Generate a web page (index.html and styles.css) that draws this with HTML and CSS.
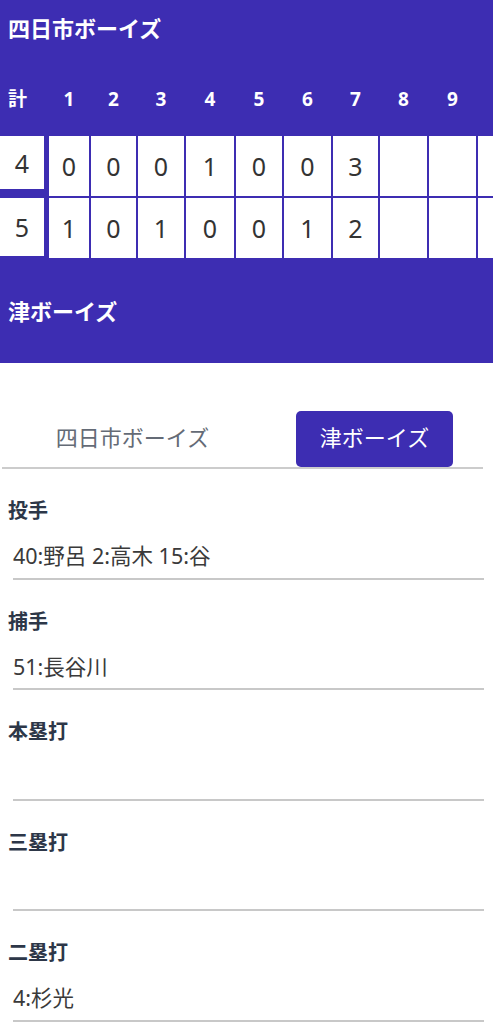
FILE: index.html
```html
<!DOCTYPE html>
<html lang="ja">
<head>
<meta charset="utf-8">
<title>スコア</title>
<link rel="stylesheet" href="styles.css">
</head>
<body>
<div class="score">
  <div class="team-name first">四日市ボーイズ</div>
  <div class="head-row">
    <div class="head-total">計</div>
    <div class="inning-grid heads">
      <div>1</div><div>2</div><div>3</div><div>4</div><div>5</div><div>6</div><div>7</div><div>8</div><div>9</div><div></div>
    </div>
  </div>
  <div class="board">
    <div class="totals">
      <div class="total t1">4</div>
      <div class="total t2">5</div>
    </div>
    <div class="inning-grid cells">
      <div>0</div><div>0</div><div>0</div><div>1</div><div>0</div><div>0</div><div>3</div><div></div><div></div><div></div>
      <div>1</div><div>0</div><div>1</div><div>0</div><div>0</div><div>1</div><div>2</div><div></div><div></div><div></div>
    </div>
  </div>
  <div class="team-name second">津ボーイズ</div>
</div>

<div class="tabs">
  <div class="tab">四日市ボーイズ</div>
  <div class="tab active">津ボーイズ</div>
</div>

<div class="stat">
  <div class="stat-label">投手</div>
  <div class="stat-value">40:野呂 2:高木 15:谷</div>
</div>
<div class="stat">
  <div class="stat-label">捕手</div>
  <div class="stat-value">51:長谷川</div>
</div>
<div class="stat">
  <div class="stat-label">本塁打</div>
  <div class="stat-value"></div>
</div>
<div class="stat">
  <div class="stat-label">三塁打</div>
  <div class="stat-value"></div>
</div>
<div class="stat">
  <div class="stat-label">二塁打</div>
  <div class="stat-value">4:杉光</div>
</div>
</body>
</html>
```
FILE: styles.css
```css
* { box-sizing: border-box; }
html, body { margin: 0; padding: 0; }
body {
  font-family: "Noto Sans", "Noto Sans CJK JP", sans-serif;
  background: #ffffff;
  width: 493px;
  overflow-x: hidden;
}

.score {
  background: #3d2db2;
  color: #ffffff;
  overflow: hidden;
}

.team-name {
  font-size: 22px;
  font-weight: 700;
  line-height: 30px;
  padding-left: 8px;
}
.team-name.first { padding-top: 13px; padding-bottom: 13px; }
.team-name.second { padding-top: 38px; padding-bottom: 37px; }

.head-row {
  display: flex;
  padding-top: 28px;
  margin-bottom: 21px;
  line-height: 30px;
  font-size: 19px;
  font-weight: 700;
}
.head-total {
  width: 47px;
  flex: none;
  padding-left: 8px;
}

.inning-grid {
  display: grid;
  grid-template-columns: 40px 45px 46px 48px 46px 47px 45px 47px 47px 47px;
  column-gap: 2px;
  padding-left: 2px;
  flex: none;
}
.heads div { text-align: center; }

.board {
  display: flex;
}
.totals {
  width: 47px;
  flex: none;
  padding-top: 1px;
}
.total {
  width: 44px;
  background: #ffffff;
  color: #333333;
  font-size: 25px;
  font-weight: 400;
  display: flex;
  align-items: center;
  justify-content: center;
}
.total.t1 { height: 53px; }
.total.t2 { height: 58px; margin-top: 9px; }

.cells {
  grid-template-rows: 60px 60px;
  row-gap: 2px;
  padding-top: 1px;
}
.cells div {
  background: #ffffff;
  color: #333333;
  font-size: 25px;
  font-weight: 400;
  display: flex;
  align-items: center;
  justify-content: center;
}

.tabs {
  display: flex;
  align-items: center;
  margin: 48px 10px 0 2px;
  border-bottom: 2px solid #cccccc;
}
.tab {
  font-size: 22px;
  line-height: 30px;
  padding: 11px 23px 15px;
  color: #646b76;
  margin-left: 30px;
  width: 201px;
  text-align: center;
}
.tab.active {
  margin-left: 63px;
  width: 157px;
  background: #3d2db2;
  color: #ffffff;
  border-radius: 5px;
  padding: 11px 0 15px;
}

.stat {
  padding-top: 30px;
}
.stat-label {
  font-size: 20px;
  font-weight: 700;
  line-height: 24px;
  color: #2d3748;
  padding-left: 8px;
}
.stat-value {
  margin: 21px 9px 0 13px;
  min-height: 35.5px;
  padding-bottom: 9.5px;
  font-size: 21.5px;
  line-height: 24px;
  color: #3a3a3a;
  border-bottom: 2px solid #c8c8c8;
}
```
